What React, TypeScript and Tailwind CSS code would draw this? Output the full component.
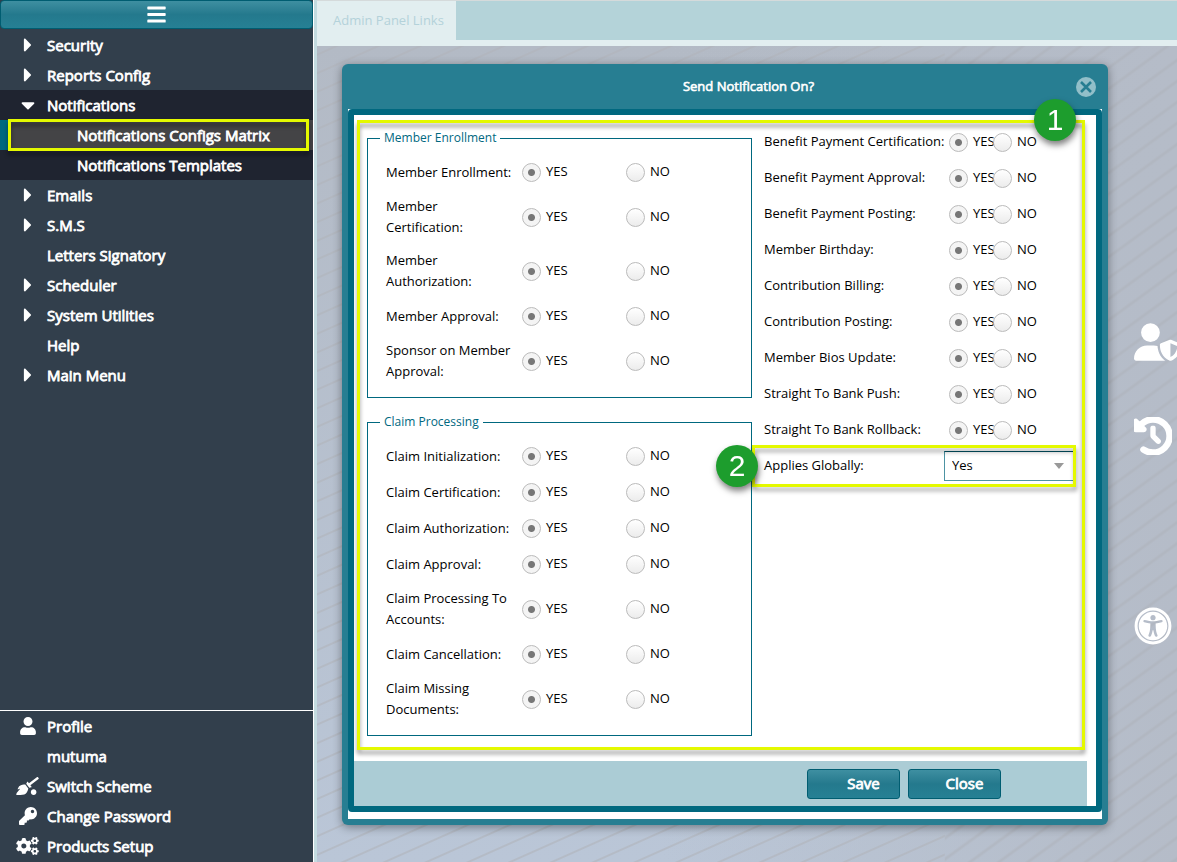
import React from 'react';
import { FaBars, FaCaretDown, FaCaretRight, FaCogs, FaKey, FaQuidditch, FaUniversalAccess, FaUser } from 'react-icons/fa';
import { FaClockRotateLeft, FaUserShield } from 'react-icons/fa6';

const menu = [
  { label: 'Security', icon: 'right' },
  { label: 'Reports Config', icon: 'right' },
  {
    label: 'Notifications',
    icon: 'down',
    children: ['Notifications Configs Matrix', 'Notifications Templates'],
  },
  { label: 'Emails', icon: 'right' },
  { label: 'S.M.S', icon: 'right' },
  { label: 'Letters Signatory' },
  { label: 'Scheduler', icon: 'right' },
  { label: 'System Utilities', icon: 'right' },
  { label: 'Help' },
  { label: 'Main Menu', icon: 'right' },
];

const account = [
  { label: 'Profile', icon: <FaUser size={18} /> },
  { label: 'mutuma', icon: null },
  { label: 'Switch Scheme', icon: <FaQuidditch size={18} className="w-[23px]" /> },
  { label: 'Change Password', icon: <FaKey size={18} /> },
  { label: 'Products Setup', icon: <FaCogs size={18} className="w-[23px]" /> },
];

const memberOptions = [
  'Member Enrollment:',
  'Member Certification:',
  'Member Authorization:',
  'Member Approval:',
  'Sponsor on Member Approval:',
];

const claimOptions = [
  'Claim Initialization:',
  'Claim Certification:',
  'Claim Authorization:',
  'Claim Approval:',
  'Claim Processing To Accounts:',
  'Claim Cancellation:',
  'Claim Missing Documents:',
];

const otherOptions = [
  'Benefit Payment Certification:',
  'Benefit Payment Approval:',
  'Benefit Payment Posting:',
  'Member Birthday:',
  'Contribution Billing:',
  'Contribution Posting:',
  'Member Bios Update:',
  'Straight To Bank Push:',
  'Straight To Bank Rollback:',
];

const Sidebar: React.FC = () => {
  return (
    <aside className="flex w-[314px] shrink-0 flex-col border-r border-white bg-[#323f4c] text-[15px] text-white [-webkit-text-stroke:0.8px_white]">
      <button
        aria-label="Toggle menu"
        className="mb-px flex h-[29px] items-center justify-center rounded-sm border border-[#005d71] bg-linear-to-b from-[#3e8fa1] via-[#24798d] to-[#268094]"
      >
        <FaBars size={21} />
      </button>
      <nav>
        {menu.map((item) => (
          <div key={item.label} className={item.children ? 'bg-[#1f2430]' : ''}>
            <a href="#" className="flex h-[30px] items-center">
              <span className="flex w-[47px] shrink-0 justify-center pl-2">
                {item.icon === 'right' && <FaCaretRight size={22} />}
                {item.icon === 'down' && <FaCaretDown size={22} />}
              </span>
              {item.label}
            </a>
            {item.children?.map((child, index) => (
              <a
                key={child}
                href="#"
                className={
                  index === 0
                    ? 'relative flex h-[30px] items-center border-l-8 border-[#00687f] bg-[#444446] pl-[69px]'
                    : 'flex h-[30px] items-center pl-[77px]'
                }
              >
                {child}
                {index === 0 && (
                  <span className="absolute -inset-y-px right-1 left-0 border-3 border-[#e4f900] drop-shadow-[0_4px_2px_rgba(0,0,0,0.4)]" />
                )}
              </a>
            ))}
          </div>
        ))}
      </nav>
      <nav className="mt-auto border-t border-white pb-px">
        {account.map((item) => (
          <a key={item.label} href="#" className="flex h-[30px] items-center">
            <span className="flex w-[47px] shrink-0 justify-center pl-2">{item.icon}</span>
            {item.label}
          </a>
        ))}
      </nav>
    </aside>
  );
};

const Radio = ({ name, value, checked }: { name: string; value: string; checked?: boolean }) => {
  return (
    <label className="flex items-center gap-[5px]">
      <input
        type="radio"
        name={name}
        value={value}
        defaultChecked={checked}
        className="size-[19px] shrink-0 appearance-none rounded-full border border-[#bbbbbb] bg-linear-to-b from-white to-[#ececec] checked:bg-[radial-gradient(circle,#777_3px,#f4f4f4_4px)]"
      />
      {value}
    </label>
  );
};

const OptionGroup = ({ title, options }: { title: string; options: string[] }) => {
  return (
    <fieldset className="border border-[#00687f] pt-[7px] pb-[9px] pl-[18px]">
      <legend className="-ml-1.5 px-1 text-xs leading-[18px] text-[#00687f]">{title}</legend>
      {options.map((option) => (
        <div
          key={option}
          role="radiogroup"
          aria-label={option}
          className="grid min-h-9 grid-cols-[136px_104px_1fr] items-center py-1.5"
        >
          <span className="pr-2 leading-[21px]">{option}</span>
          <Radio name={option} value="YES" checked />
          <Radio name={option} value="NO" />
        </div>
      ))}
    </fieldset>
  );
};

const Badge = ({ children }: { children: React.ReactNode }) => {
  return (
    <span className="flex size-[42px] items-center justify-center rounded-full bg-[#1d9d2d] font-['Liberation_Sans',sans-serif] text-3xl text-white drop-shadow-[1px_4px_3px_rgba(0,0,0,0.5)]">
      {children}
    </span>
  );
};

const buttonClass =
  'h-[30px] w-[93px] rounded-[3px] border border-[#005d71] bg-linear-to-b from-[#3e8fa1] via-[#24798d] to-[#268094] pl-5 text-[15px] text-white [-webkit-text-stroke:0.8px_white]';

const NotificationDialog: React.FC = () => {
  return (
    <section
      role="dialog"
      aria-labelledby="dialog-title"
      className="min-w-0 flex-1 rounded-md bg-[#277e92] px-1.5 pb-1.5 shadow-[0_2px_10px_rgba(0,0,0,0.4)]"
    >
      <header className="flex h-[45px] items-center pr-1.5 pl-[73px]">
        <h1 id="dialog-title" className="flex-1 text-center text-[13px] text-white [-webkit-text-stroke:0.6px_white]">
          Send Notification On?
        </h1>
        <button aria-label="Close dialog" className="flex size-5 items-center justify-center rounded-full bg-[#92bfc9]">
          <svg viewBox="0 0 20 20" className="size-5" fill="none" stroke="#277e92" strokeWidth="2.6">
            <path d="M5 5l10 10M15 5L5 15" />
          </svg>
        </button>
      </header>
      <div className="bg-white pb-[7px]">
        <div className="relative rounded-[4px] border-6 border-[#00687f] bg-white pr-[9px]">
          <form>
            <div className="flex gap-3 pt-[9px] pb-[25px] pl-[13px] text-[13px] text-black">
              <div className="flex w-[385px] shrink-0 flex-col gap-[15px] pt-[5px]">
                <OptionGroup title="Member Enrollment" options={memberOptions} />
                <OptionGroup title="Claim Processing" options={claimOptions} />
              </div>
              <div className="min-w-0 flex-1">
                {otherOptions.map((option) => (
                  <div key={option} role="radiogroup" aria-label={option} className="flex h-9 items-center">
                    <span className="w-[185px] shrink-0">{option}</span>
                    <span className="w-11 shrink-0">
                      <Radio name={option} value="YES" checked />
                    </span>
                    <Radio name={option} value="NO" />
                  </div>
                ))}
                <div className="relative flex h-9 items-center">
                  <label htmlFor="applies" className="w-[180px] shrink-0">
                    Applies Globally:
                  </label>
                  <div className="relative">
                    <select
                      id="applies"
                      className="h-[30px] w-[130px] appearance-none border border-[#4d93a3] border-t-[#004f61] bg-white px-[7px]"
                    >
                      <option>Yes</option>
                      <option>No</option>
                    </select>
                    <svg viewBox="0 0 10 6" className="pointer-events-none absolute top-3 right-2.5 h-1.5 w-2.5" fill="#999999">
                      <path d="M0 0h10L5 6z" />
                    </svg>
                  </div>
                  <span className="pointer-events-none absolute -top-[3px] -bottom-[3px] -left-3 w-[324px] border-3 border-[#e4f900] drop-shadow-[1px_4px_2px_rgba(0,0,0,0.35)]" />
                  <span className="absolute -top-[3px] -left-12">
                    <Badge>2</Badge>
                  </span>
                </div>
              </div>
            </div>
            <footer className="flex h-[45px] items-center justify-end gap-2 bg-[#abccd5] pr-[86px]">
              <button type="button" className={buttonClass}>
                Save
              </button>
              <button type="button" className={buttonClass}>
                Close
              </button>
            </footer>
          </form>
          <span className="pointer-events-none absolute top-[5px] right-[11px] bottom-[56px] left-[3px] border-3 border-[#e4f900] drop-shadow-[0_4px_2px_rgba(0,0,0,0.4)]" />
          <span className="absolute -top-4 right-5">
            <Badge>1</Badge>
          </span>
        </div>
      </div>
    </section>
  );
};

const Backdrop: React.FC = () => {
  return (
    <svg className="absolute inset-0 -z-10 h-full w-full bg-linear-to-b from-[#b3bac5] to-[#bac6d7]" aria-hidden="true">
      <defs>
        <pattern id="stripes" width="40" height="17" patternUnits="userSpaceOnUse" patternTransform="rotate(-24)">
          <path d="M0 8h40" stroke="#b1b4ba" strokeWidth="2" opacity="0.6" />
        </pattern>
        <pattern id="stripes-steep" width="40" height="17" patternUnits="userSpaceOnUse" patternTransform="rotate(-36)">
          <path d="M0 7h40" stroke="#adb2ba" strokeWidth="3" opacity="0.5" />
        </pattern>
        <linearGradient id="shade" x1="0" x2="1" y1="0" y2="0">
          <stop offset="0.4" stopColor="#b5bcc8" stopOpacity="0" />
          <stop offset="1" stopColor="#b5bcc8" />
        </linearGradient>
      </defs>
      <rect width="100%" height="100%" fill="url(#shade)" />
      <rect width="73%" height="100%" fill="url(#stripes)" />
      <rect x="73%" width="27%" height="100%" fill="url(#stripes-steep)" />
    </svg>
  );
};

const App: React.FC = () => {
  return (
    <div className="flex min-h-screen overflow-hidden font-['Open_Sans',sans-serif]">
      <Sidebar />
      <main className="flex min-w-0 flex-1 flex-col border-l-3 border-[#c3dbe0]">
        <div className="flex h-[46px] items-start border-t border-[#d5dadb] bg-[#e2eef0]">
          <a href="#" className="flex h-[39px] items-center rounded-t-md pr-3 pl-4 text-[13px] text-[#b4d2da]">
            Admin Panel Links
          </a>
          <div className="h-[39px] flex-1 bg-[#b4d3d9]" />
        </div>
        <div className="relative isolate flex flex-1 items-start overflow-hidden pt-[18px] pb-9 pl-[25px]">
          <Backdrop />
          <NotificationDialog />
          <div className="ml-[26px] flex w-[43px] shrink-0 flex-col pt-[259px] text-white">
            <a href="#" aria-label="User roles" className="mb-14 w-[47px]">
              <FaUserShield className="h-[38px] w-[47px]" />
            </a>
            <a href="#" aria-label="History" className="mb-[152px] w-[38px]">
              <FaClockRotateLeft className="size-[38px]" strokeWidth={24} stroke="currentColor" />
            </a>
            <a href="#" aria-label="Accessibility" className="w-[38px]">
              <FaUniversalAccess className="size-[38px]" />
            </a>
          </div>
        </div>
      </main>
    </div>
  );
};

export default App;
